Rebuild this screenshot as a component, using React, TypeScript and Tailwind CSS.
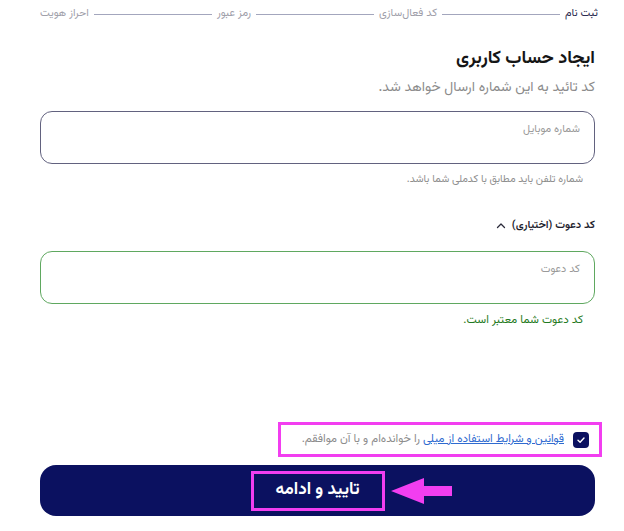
import React from "react";

const steps = ["ثبت نام", "کد فعال‌سازی", "رمز عبور", "احراز هویت"];

const font = {
  fontFamily: '"Vazirmatn", "Noto Sans Arabic", "DejaVu Sans", sans-serif',
};

const App = () => {
  return (
    <div
      dir="rtl"
      style={font}
      className="w-[624px] h-[531px] bg-white pr-[29px] pl-[40px] overflow-hidden"
    >
      {/* Stepper */}
      <div className="flex items-center gap-[5px] h-[28px] -mr-[3px]">
        {steps.map((s, i) => (
          <React.Fragment key={s}>
            <span
              className={
                i === 0
                  ? "text-[11px] text-[#2b2b50] whitespace-nowrap"
                  : "text-[11px] text-[#a0a0aa] whitespace-nowrap"
              }
            >
              {s}
            </span>
            {i < steps.length - 1 && <div className="flex-1 h-px bg-[#a3a6bd]" />}
          </React.Fragment>
        ))}
      </div>

      <h1 className="mt-[19px] text-[18px] font-bold text-[#151515] leading-[24px]">
        ایجاد حساب کاربری
      </h1>
      <p className="mt-[7px] text-[14px] text-[#8c8c8c] leading-[20px]">
        کد تائید به این شماره ارسال خواهد شد.
      </p>

      {/* Mobile input */}
      <div className="mt-[13px] h-[53px] rounded-[12px] border border-[#62627f] pr-[14px] pt-[5px]">
        <span className="text-[11px] text-[#9a9a9a]">شماره موبایل</span>
      </div>
      <p className="mt-[8px] pr-[12px] text-[10.5px] text-[#8f8f8f] leading-[16px]">
        شماره تلفن باید مطابق با کدملی شما باشد.
      </p>

      {/* Invite code */}
      <div className="mt-[28px] flex items-center gap-[6px] h-[20px]">
        <span className="text-[11px] font-semibold text-[#1e1e2e]">کد دعوت (اختیاری)</span>
        <svg width="10" height="10" viewBox="0 0 10 10" fill="none">
          <path d="M1.5 6.5L5 3L8.5 6.5" stroke="#2a2a3a" strokeWidth="1.3" strokeLinecap="round" strokeLinejoin="round" />
        </svg>
      </div>
      <div className="mt-[15px] h-[53px] rounded-[12px] border border-[#5fa860] pr-[14px] pt-[5px]">
        <span className="text-[11px] text-[#9a9a9a]">کد دعوت</span>
      </div>
      <p className="mt-[8px] pr-[12px] text-[11.5px] text-[#1f7a22] leading-[16px]">
        کد دعوت شما معتبر است.
      </p>

      {/* Terms */}
      <div className="mt-[94px] flex">
        <div className="-mr-[7px] w-[324px] h-[35px] border-[3px] border-[#f23ef0] flex items-center gap-[9px] pr-[10px]">
          <span className="w-[16px] h-[16px] rounded-[4px] bg-[#0b1160] flex items-center justify-center shrink-0">
            <svg width="10" height="10" viewBox="0 0 10 10" fill="none">
              <path d="M2 5.2L4.1 7.2L8 3" stroke="white" strokeWidth="1.4" strokeLinecap="round" strokeLinejoin="round" />
            </svg>
          </span>
          <span className="text-[11.5px] text-[#8c8c8c] whitespace-nowrap">
            <a className="text-[#2f6bd0] underline">قوانین و شرایط استفاده از میلی</a> را خوانده‌ام و با آن موافقم.
          </span>
        </div>
      </div>

      {/* Submit */}
      <button className="mt-[8px] w-full h-[51px] rounded-[16px] bg-[#0b1160] flex items-center justify-center">
        <span className="relative w-[134px] h-[40px] border-[3px] border-[#f23ef0] flex items-center justify-center text-[17px] font-bold text-white">
          تایید و ادامه
          <svg
            width="62"
            height="28"
            viewBox="0 0 62 28"
            className="absolute right-[-70px] top-1/2 -translate-y-1/2"
          >
            <path d="M62 9H34V1L1 14L34 27V19H62Z" fill="#f23ef0" />
          </svg>
        </span>
      </button>
    </div>
  );
};

export default App;
